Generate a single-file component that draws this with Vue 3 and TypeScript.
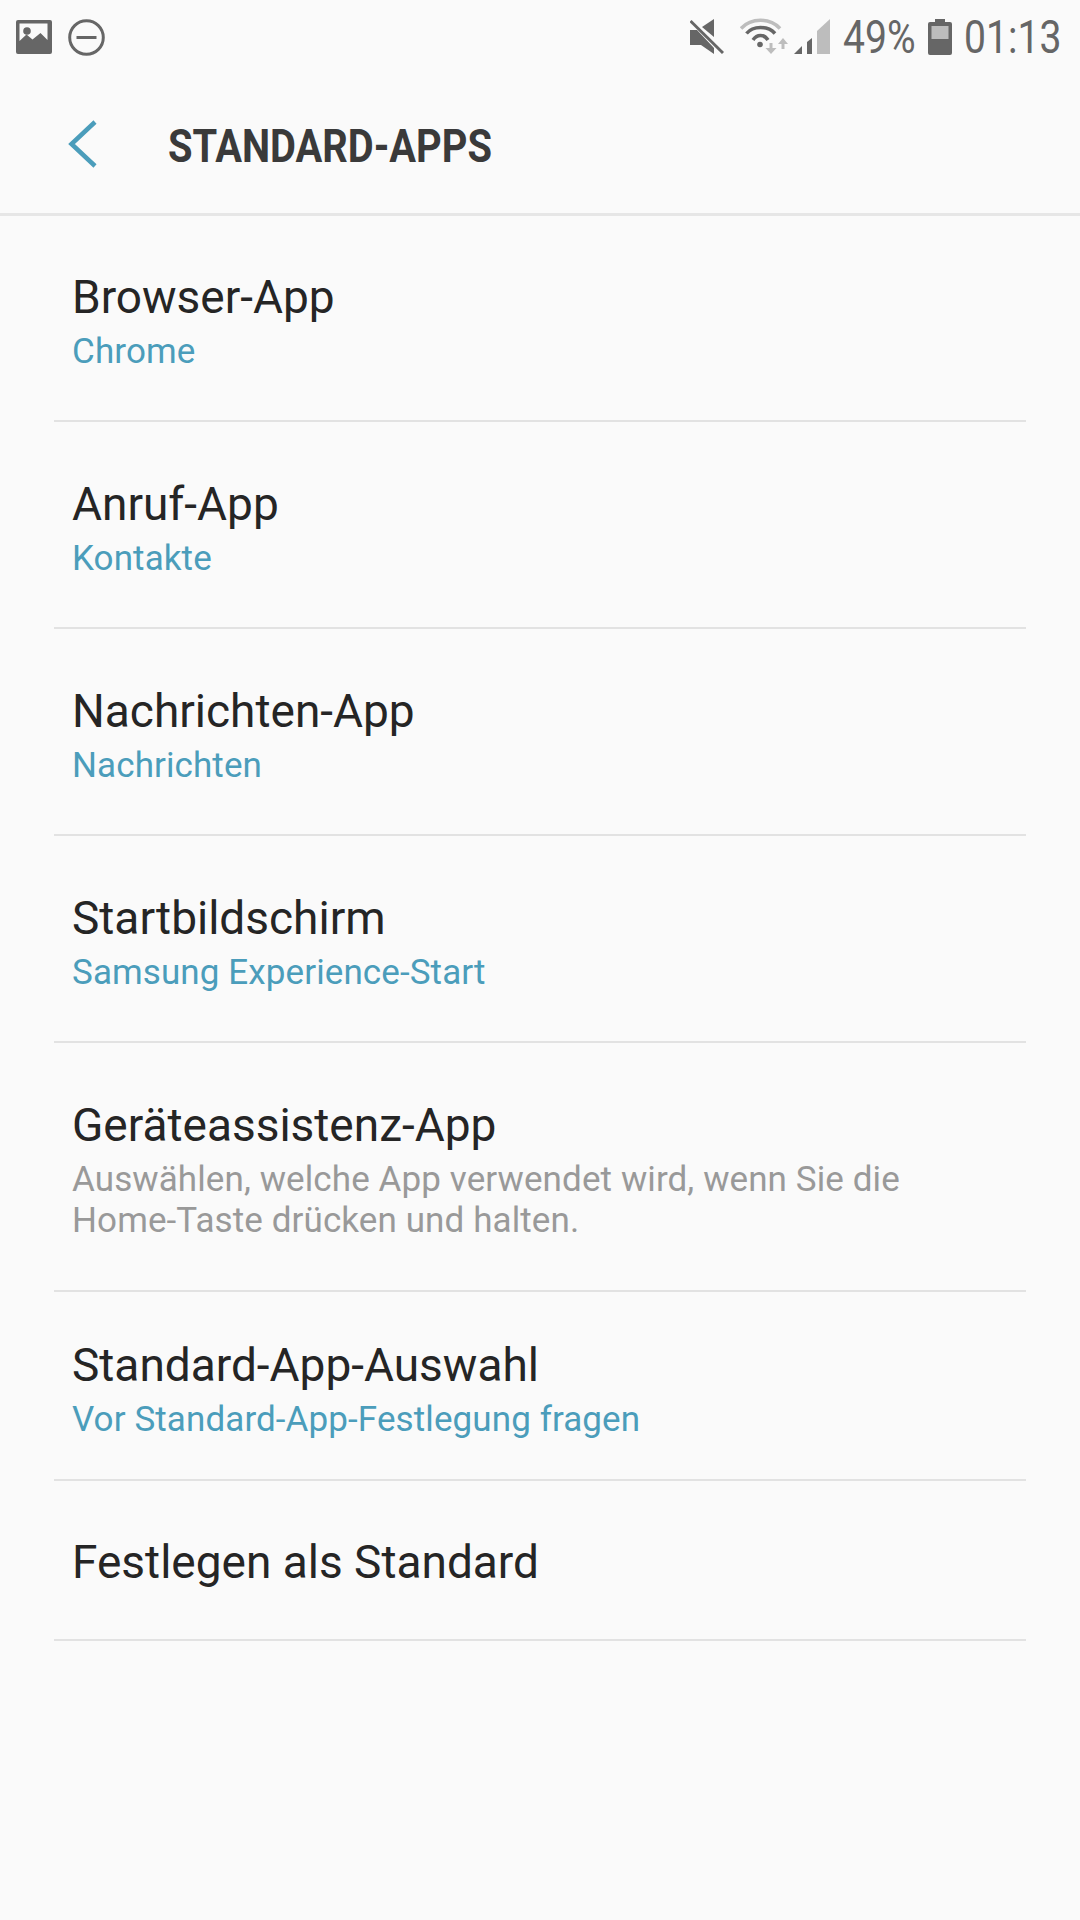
<script setup lang="ts">
// Standard apps settings list
interface Row {
  title: string;
  sub?: string;
  muted?: boolean;
  height: number;
}

const rows: Row[] = [
  { title: 'Browser-App', sub: 'Chrome', height: 206 },
  { title: 'Anruf-App', sub: 'Kontakte', height: 207 },
  { title: 'Nachrichten-App', sub: 'Nachrichten', height: 207 },
  { title: 'Startbildschirm', sub: 'Samsung Experience-Start', height: 207 },
  {
    title: 'Geräteassistenz-App',
    sub: 'Auswählen, welche App verwendet wird, wenn Sie die Home-Taste drücken und halten.',
    muted: true,
    height: 249,
  },
  { title: 'Standard-App-Auswahl', sub: 'Vor Standard-App-Festlegung fragen', height: 189 },
  { title: 'Festlegen als Standard', height: 160 },
];
</script>

<template>
  <div class="screen">
    <div class="status">
      <div class="status-left">
        <svg width="36" height="34" viewBox="0 0 36 34">
          <path fill="#666" fill-rule="evenodd" d="M2 0h32a2 2 0 0 1 2 2v30a2 2 0 0 1-2 2H2a2 2 0 0 1-2-2V2a2 2 0 0 1 2-2zM3.500 3.500V21l7-6.500 6 5 8-6.500 7 7V3.500z" />
          <circle cx="11" cy="11" r="3.800" fill="#666" />
        </svg>
        <svg width="37" height="37" viewBox="0 0 37 37">
          <circle cx="18.500" cy="18.500" r="16.800" fill="none" stroke="#666" stroke-width="3" />
          <path d="M8.500 18.500h20" stroke="#666" stroke-width="3" />
        </svg>
      </div>
      <div class="status-right">
        <svg class="ic-mute" width="34" height="36" viewBox="0 0 34 36">
          <path fill="#666" d="M0 11h7L24 29v6L11 26H0zM12 8L24 0v18z" />
          <path d="M0.500 2L33 34" stroke="#666" stroke-width="3" />
        </svg>
        <svg class="ic-wifi" width="48" height="38" viewBox="0 0 48 38">
          <path d="M1 10.500C11 -0.500 30 -0.500 40 10.500" fill="none" stroke="#bdbdbd" stroke-width="3.500" />
          <path d="M6.500 15.500C13 7.500 28 7.500 35 15.500" fill="none" stroke="#666" stroke-width="3.500" />
          <path d="M13 22C17 16 24 16 28 22" fill="none" stroke="#666" stroke-width="3.500" />
          <circle cx="20" cy="26.500" r="2.800" fill="#666" />
          <path fill="#bdbdbd" d="M29.500 25h3v5h4l-5.500 6-5.500-6h4zM43 20l5 6h-3.500v5h-3v-5H38z" />
        </svg>
        <svg class="ic-signal" width="36" height="36" viewBox="0 0 36 36">
          <path fill="#666" d="M0 35l8-8v8zM13 23l5-4v16h-5z" />
          <path fill="#bdbdbd" d="M23 12L36 0v35H23z" />
        </svg>
        <span class="stat-text pct">49%</span>
        <svg class="ic-batt" width="24" height="36" viewBox="0 0 24 36">
          <path fill="#666" d="M7 0h10v3h5a2 2 0 0 1 2 2v29a2 2 0 0 1-2 2H2a2 2 0 0 1-2-2V5a2 2 0 0 1 2-2h5z" />
          <rect x="3.500" y="7" width="17" height="13" fill="#bdbdbd" />
        </svg>
        <span class="stat-text time">01:13</span>
      </div>
    </div>

    <header class="bar">
      <svg class="back" width="30" height="48" viewBox="0 0 30 48">
        <path d="M27 2L3.500 24 27 46" fill="none" stroke="#4b9dbb" stroke-width="4.500" />
      </svg>
      <h1 class="title">STANDARD-APPS</h1>
    </header>

    <div class="list">
      <div v-for="row in rows" :key="row.title" class="row" :style="{ height: row.height + 'px' }">
        <div class="row-title">{{ row.title }}</div>
        <div v-if="row.sub" :class="['row-sub', { muted: row.muted }]">{{ row.sub }}</div>
      </div>
    </div>
  </div>
</template>

<style>
html, body { margin: 0; background: #fafafa; }
</style>

<style scoped>
.screen {
  width: 1080px;
  height: 1920px;
  background: #fafafa;
  font-family: Roboto, sans-serif;
  overflow: hidden;
}

.status {
  height: 74px;
  display: flex;
  align-items: center;
  justify-content: space-between;
  padding: 0 20px 0 16px;
}
.status-left { display: flex; align-items: center; gap: 16px; }
.status-right { display: flex; align-items: center; }
.stat-text {
  font-size: 46px;
  color: #666;
  display: inline-block;
  transform-origin: left center;
  line-height: 1;
}
.ic-mute { margin-right: 16px; }
.ic-wifi { margin-right: 6px; }
.ic-signal { margin-right: 13px; }
.pct { width: 85px; transform: scaleX(0.85); }
.ic-batt { margin: 0 12px 0 0; }
.time { width: 96px; transform: scaleX(0.85); }

.bar {
  height: 142px;
  box-sizing: border-box;
  border-bottom: 3px solid #e6e6e6;
  display: flex;
  align-items: center;
  padding: 0 0 0 68px;
}
.back { margin: 0 70px 0 0; }
.title {
  margin: 5px 0 0;
  font-size: 46px;
  font-weight: 700;
  color: #3a3a3a;
  white-space: nowrap;
  transform: scaleX(0.866);
  transform-origin: left center;
}

.list { padding: 0 54px; }
.row {
  box-sizing: border-box;
  border-bottom: 2px solid #e2e2e2;
  padding: 6px 60px 0 18px;
  display: flex;
  flex-direction: column;
  justify-content: center;
}
.row:last-child { padding-top: 3px; }
.row-title {
  font-size: 46px;
  line-height: 54px;
  color: #252525;
  white-space: nowrap;
}
.row-sub {
  font-size: 35px;
  line-height: 41px;
  letter-spacing: 0.1px;
  color: #4b9dbb;
  margin-top: 7px;
}
.row-sub.muted { color: #999; }
</style>
